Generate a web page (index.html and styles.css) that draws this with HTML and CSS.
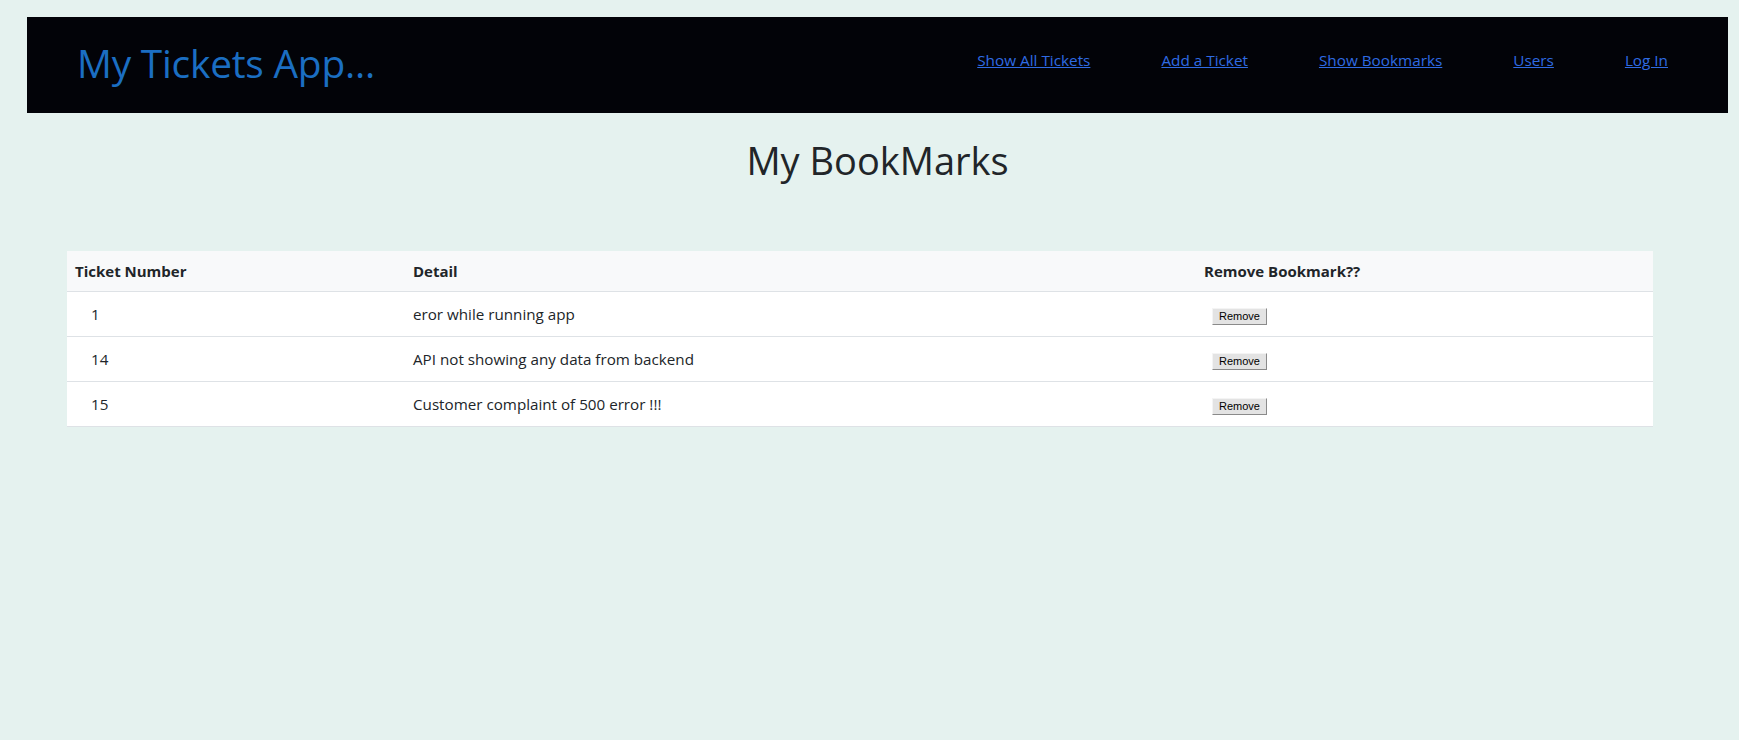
FILE: index.html
```html
<!DOCTYPE html>
<html lang="en">
<head>
<meta charset="utf-8">
<title>My Tickets App</title>
<link rel="stylesheet" href="styles.css">
</head>
<body>
<div class="page">
  <header class="topbar">
    <a class="brand">My Tickets App...</a>
    <nav class="nav">
      <a href="#">Show All Tickets</a>
      <a href="#">Add a Ticket</a>
      <a href="#">Show Bookmarks</a>
      <a href="#">Users</a>
      <a href="#">Log In</a>
    </nav>
  </header>
  <main class="content">
    <h2 class="title">My BookMarks</h2>
    <table class="bm-table">
      <thead>
        <tr>
          <th class="c-num">Ticket Number</th>
          <th class="c-detail">Detail</th>
          <th class="c-remove">Remove Bookmark??</th>
        </tr>
      </thead>
      <tbody>
        <tr>
          <td class="num">1</td>
          <td>eror while running app</td>
          <td class="act"><button class="btn-remove">Remove</button></td>
        </tr>
        <tr>
          <td class="num">14</td>
          <td>API not showing any data from backend</td>
          <td class="act"><button class="btn-remove">Remove</button></td>
        </tr>
        <tr>
          <td class="num">15</td>
          <td>Customer complaint of 500 error !!!</td>
          <td class="act"><button class="btn-remove">Remove</button></td>
        </tr>
      </tbody>
    </table>
  </main>
</div>
</body>
</html>
```

FILE: styles.css
```css
html, body {
  margin: 0;
  padding: 0;
}
body {
  background: #e5f2ef;
  font-family: "Open Sans", "Noto Sans", sans-serif;
  color: #212529;
  height: 740px;
}
.page {
  padding: 17px 11px 0 27px;
}
.topbar {
  background: #020308;
  height: 96px;
  display: flex;
  justify-content: space-between;
  align-items: flex-start;
  padding: 0 60px 0 50px;
}
.brand {
  font-size: 38.8px;
  line-height: 48px;
  color: #1b6ec2;
  margin-top: 22px;
  letter-spacing: -0.2px;
}
.nav {
  display: flex;
  gap: 71px;
  margin-top: 31px;
}
.nav a {
  color: #2f6be3;
  font-size: 15.3px;
  line-height: 24px;
  text-decoration: underline;
}
.content {
  display: flex;
  flex-direction: column;
}
.title {
  margin: 23px 0 0 0;
  text-align: center;
  font-size: 38px;
  line-height: 48px;
  font-weight: 400;
  color: #212529;
}
.bm-table {
  margin: 67px 0 0 40px;
  width: 1586px;
  border-collapse: collapse;
  background: #ffffff;
  font-size: 15.2px;
}
.bm-table thead tr {
  background: #f8f9fa;
}
.bm-table th {
  text-align: left;
  font-weight: 700;
  font-size: 15px;
  padding: 0 8px;
  height: 40px;
  border-bottom: 1px solid #dee2e6;
}
.c-num { width: 322px; }
.c-detail { width: 775px; }
.bm-table td {
  padding: 10px 8px 10px 8px;
  line-height: 24px;
  border-bottom: 1px solid #dee2e6;
  vertical-align: baseline;
}
.bm-table td.num {
  padding-left: 24px;
}
.bm-table td.act {
  padding-left: 16px;
}
.btn-remove {
  font-family: "Liberation Sans", Arial, sans-serif;
  font-size: 11px;
  line-height: 13px;
  color: #000;
  background: #e3e3e3;
  border: 1px solid;
  border-color: #f4f4f4 #8a8a8a #8a8a8a #f4f4f4;
  padding: 1px 6px;
  margin: 0;
  border-radius: 0;
}
```
